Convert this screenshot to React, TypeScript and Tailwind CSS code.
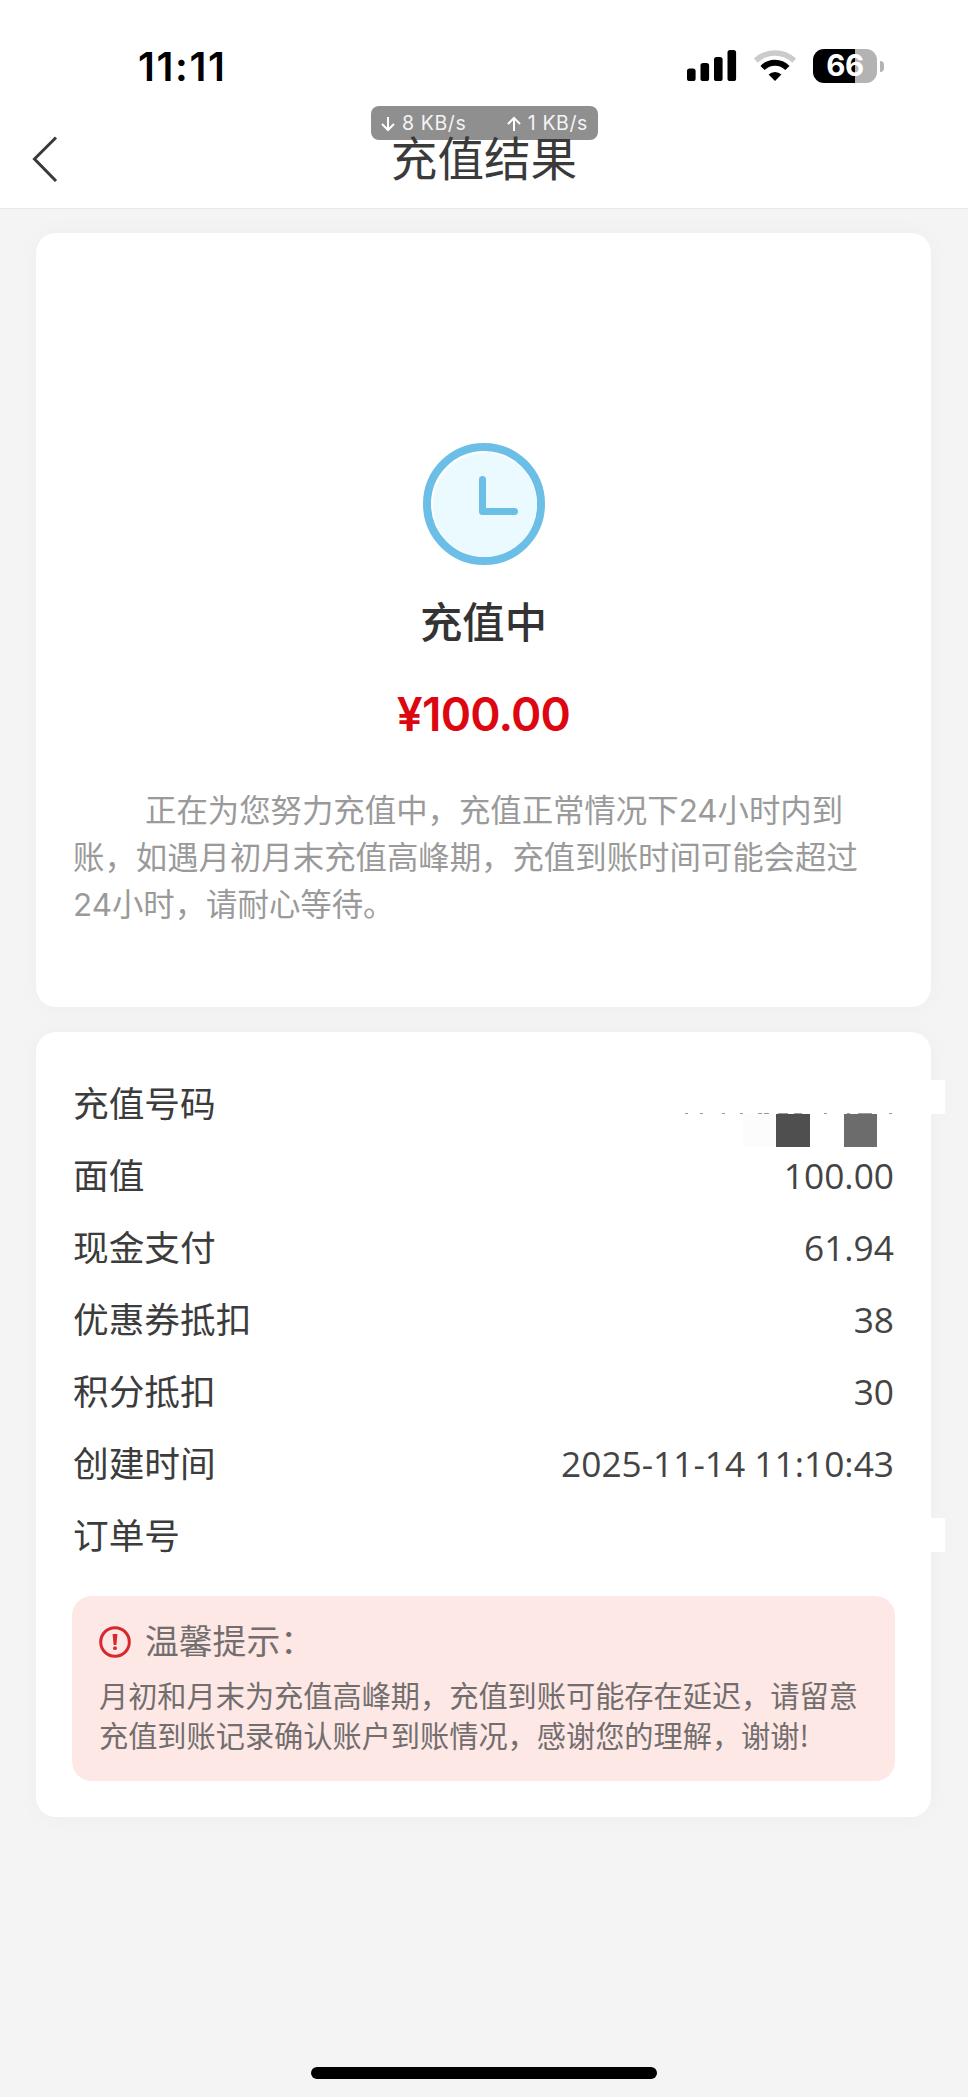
import React from "react";

interface DetailRow {
  label: string;
  value: string;
  masked?: "number" | "blank";
}

const rows: DetailRow[] = [
  { label: "充值号码", value: "", masked: "number" },
  { label: "面值", value: "100.00" },
  { label: "现金支付", value: "61.94" },
  { label: "优惠券抵扣", value: "38" },
  { label: "积分抵扣", value: "30" },
  { label: "创建时间", value: "2025-11-14 11:10:43" },
  { label: "订单号", value: "", masked: "blank" },
];

const StatusIcons: React.FC = () => (
  <div className="flex items-center">
    <svg width="50" height="32" viewBox="0 0 50 32">
      <rect x="0" y="18.5" width="8.6" height="12.5" rx="2.6" />
      <rect x="13.5" y="13" width="8.6" height="18" rx="2.6" />
      <rect x="27" y="7" width="8.6" height="24" rx="2.6" />
      <rect x="40.5" y="0" width="8.6" height="31" rx="2.6" />
    </svg>
    <svg className="ml-[16px]" width="44" height="32" viewBox="0 0 44 32">
      <path d="M2.8 10.6 A28 28 0 0 1 41.2 10.6" fill="none" stroke="#cbcbcb" strokeWidth="5.6" />
      <path d="M9.6 18 A17.5 17.5 0 0 1 34.4 18" fill="none" stroke="#000" strokeWidth="6" />
      <path d="M22 31 L15.6 24.6 A9.4 9.4 0 0 1 28.4 24.6 Z" />
    </svg>
    <div className="ml-[16px] flex h-[34px] w-[64px] items-center justify-center rounded-[11px] bg-linear-to-r from-black from-[66%] to-[#b3b3b3] to-[66%]">
      <span className="text-[29.5px] font-bold leading-none tracking-[-0.3px] text-white">66</span>
    </div>
    <div className="ml-[3px] h-[11px] w-[4px] rounded-r-[4px] bg-[#b3b3b3]" />
  </div>
);

const Arrow: React.FC<{ up?: boolean }> = ({ up }) => (
  <svg width="14" height="16" viewBox="0 0 14 16" fill="none" stroke="#fff" strokeWidth="2">
    {up ? <path d="M7 15 V2 M1 8 L7 2 L13 8" /> : <path d="M7 1 V14 M1 8 L7 14 L13 8" />}
  </svg>
);

const SpeedBadge: React.FC = () => (
  <div className="absolute left-[371px] top-[106px] flex h-[34px] w-[227px] items-center justify-between rounded-[8px] bg-[#8f8f8f] pl-[10px] pr-[10px] pt-[2px] text-[19.5px] text-[#f4f4f4]">
    <span className="flex items-center gap-[7px]">
      <Arrow />
      <span className="tracking-[0.6px]">8 KB/s</span>
    </span>
    <span className="flex items-center gap-[7px]">
      <Arrow up />
      <span className="tracking-[0.6px]">1 KB/s</span>
    </span>
  </div>
);

// Only a sliver of the digits is left above the mosaic blocks
const MaskedNumber: React.FC = () => (
  <svg
    className="absolute right-[-50px] top-[13px]"
    width="262"
    height="67"
    viewBox="0 0 262 67"
  >
    <rect x="200" y="0" width="62" height="34" fill="#fff" />
    <path
      d="M2 33.5h3M17 33.5h3M39 33.5h3M57 33.5h3M75 33.5h4M81 33.5h5M95 33.5h10M111 33.5h8M141 33.5h3M164 33.5h3M175 33.5h14M206 33.5h3"
      stroke="#9a9a9a"
      strokeWidth="1"
    />
    <rect x="60" y="34" width="33" height="33" fill="#fcfcfc" />
    <rect x="93" y="34" width="34" height="33" fill="#4f4f4f" />
    <rect x="161" y="34" width="33" height="33" fill="#6c6c6c" />
  </svg>
);

const Row: React.FC<{ row: DetailRow }> = ({ row }) => (
  <div className="relative flex h-[72px] items-center justify-between text-[#3c3c3c]">
    <span className="-mt-[3px] pl-[1px] text-[35.7px]">{row.label}</span>
    <span className="pr-[1px] font-['Open_Sans'] text-[35.3px] text-[#444]">{row.value}</span>
    {row.masked === "number" && <MaskedNumber />}
    {row.masked === "blank" && (
      <div className="absolute right-[-50px] top-[19px] h-[34px] w-[62px] bg-white" />
    )}
  </div>
);

const ResultCard: React.FC = () => (
  <section className="mx-[36px] mt-[24px] flex h-[774px] w-[895px] flex-col items-center rounded-[20px] bg-white pt-[210px] shadow-[0_0_24px_rgba(0,0,0,0.03)]">
    <svg width="122" height="122" viewBox="0 0 122 122" fill="none">
      <circle cx="61" cy="61" r="57" fill="#fff" stroke="#6bbee6" strokeWidth="8" />
      <circle cx="62" cy="62" r="52" fill="#eafaff" />
      <path
        d="M59.5 36.5 V68.5 H91.5"
        stroke="#6bbee6"
        strokeWidth="7"
        strokeLinecap="round"
        strokeLinejoin="round"
      />
    </svg>
    <h2 className="mt-[23px] text-[42.3px] font-medium leading-[64px] text-[#333]">充值中</h2>
    <div className="mt-[30px] font-['Inter'] text-[46px] font-semibold leading-[64px] tracking-[-0.8px] text-[#dc0710]">
      ¥100.00
    </div>
    <p className="mt-[42px] w-full whitespace-nowrap pl-[37px] font-['Inter','Noto_Sans_CJK_SC',sans-serif] text-[31.4px] leading-[47.2px] text-[#9a9a9a]">
      <span className="ml-[72px]">正在为您努力充值中，充值正常情况下24小时内到</span>
      <br />
      账，如遇月初月末充值高峰期，充值到账时间可能会超过
      <br />
      24小时，请耐心等待。
    </p>
  </section>
);

const Notice: React.FC = () => (
  <div className="mt-[25px] h-[185px] rounded-[20px] bg-[#fde8e6] pl-[27px] pt-[22px]">
    <div className="flex h-[48px] items-center">
      <svg width="32" height="32" viewBox="0 0 32 32" fill="none">
        <circle cx="16" cy="16" r="14.3" stroke="#d9282d" strokeWidth="3" />
        <path d="M13.6 8 H18.4 L17.4 19 H14.6 Z" fill="#d9282d" />
        <circle cx="16" cy="22.2" r="1.9" fill="#d9282d" />
      </svg>
      <span className="-mt-[3px] ml-[14px] text-[33.8px] text-[#736e6e]">温馨提示：</span>
    </div>
    <p className="mt-[8px] whitespace-nowrap text-[29.2px] leading-[40.3px] text-[#736e6e]">
      月初和月末为充值高峰期，充值到账可能存在延迟，请留意
      <br />
      充值到账记录确认账户到账情况，感谢您的理解，谢谢!
    </p>
  </div>
);

const App: React.FC = () => (
  <div className="relative flex h-[2097px] w-[968px] flex-col overflow-hidden bg-[#f4f4f4] font-['Noto_Sans_CJK_SC',sans-serif]">
    <header className="h-[209px] border-b border-[#e8e8e8] bg-white font-['Inter','Noto_Sans_CJK_SC',sans-serif]">
      <div className="flex h-[110px] items-center justify-between pl-[138px] pr-[84px] pt-[22px]">
        <span className="mt-[1px] text-[40px] font-semibold leading-none tracking-[1.6px]">11:11</span>
        <StatusIcons />
      </div>
      <SpeedBadge />
      <div className="relative flex h-[97px] items-center justify-center">
        <svg
          className="absolute left-[32px] top-[26px]"
          width="26"
          height="46"
          viewBox="0 0 26 46"
          fill="none"
          stroke="#3a3a3a"
          strokeWidth="3"
        >
          <path d="M24 1.5 L2.5 23 L24 45" />
        </svg>
        <h1 className="text-[46.6px] leading-[60px] text-[#3a3a3a]">充值结果</h1>
      </div>
    </header>

    <main className="flex-1">
      <ResultCard />
      <section className="mx-[36px] mt-[25px] h-[785px] w-[895px] rounded-[20px] bg-white px-[36px] pt-[35px] shadow-[0_0_24px_rgba(0,0,0,0.03)]">
        {rows.map((row) => (
          <Row key={row.label} row={row} />
        ))}
        <Notice />
      </section>
    </main>

    <div className="mx-auto mb-[18px] h-[12px] w-[346px] rounded-full bg-black" />
  </div>
);

export default App;
